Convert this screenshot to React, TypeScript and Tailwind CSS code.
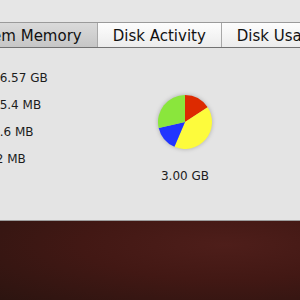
const FONT = { fontFamily: '"DejaVu Sans", "Liberation Sans", sans-serif' };

const TABS = [
  { label: "System Memory", active: true },
  { label: "Disk Activity", active: false },
  { label: "Disk Usage", active: false },
];

// values are clipped on the left edge of the window
const ROWS = ["16.57 GB", "45.4 MB", "8.6 MB", "\u00a02 MB"];

function Pie() {
  return (
    <svg width="54" height="54" viewBox="0 0 54 54" className="drop-shadow-[0_0_2px_rgba(0,0,0,0.25)]">
      <path d="M27 27 L27 0 A27 27 0 0 1 49.64 12.3 Z" fill="#dd2a00" />
      <path d="M27 27 L49.64 12.3 A27 27 0 0 1 16.45 51.85 Z" fill="#fdfb3c" />
      <path d="M27 27 L16.45 51.85 A27 27 0 0 1 0.69 33.07 Z" fill="#2135ff" />
      <path d="M27 27 L0.69 33.07 A27 27 0 0 1 27 0 Z" fill="#8ae63c" />
    </svg>
  );
}

export default function App() {
  return (
    <div className="w-[300px] h-[300px] overflow-hidden flex flex-col" style={FONT}>
      <div className="bg-[#e6e6e6] pt-[22px] border-b border-[#9c9c9c]">
        {/* Tab strip */}
        <div className="flex ml-[-55px] border-t border-b border-t-[#9a9a9a] border-b-[#727272] shadow-[0_1px_1px_rgba(0,0,0,0.12)]">
          {TABS.map((t) => (
            <div
              key={t.label}
              className={`shrink-0 h-[24px] px-[15px] pt-[3px] leading-[21px] text-[15px] text-[#111] whitespace-nowrap border-r border-[#a8a8a8] ${
                t.active
                  ? "bg-gradient-to-b from-[#dadada] to-[#c6c6c6]"
                  : "bg-gradient-to-b from-[#fdfdfd] to-[#ececec]"
              }`}
            >
              {t.label}
            </div>
          ))}
        </div>

        {/* Panel */}
        <div className="h-[172px] flex pt-[17px] bg-[#e4e4e4]">
          <div className="w-[163px] shrink-0 ml-[-8px] flex flex-col">
            {ROWS.map((r) => (
              <div key={r} className="text-[12px] leading-[27px] text-[#1c1c1c] whitespace-nowrap">
                {r}
              </div>
            ))}
          </div>
          <div className="w-[60px] shrink-0 flex flex-col items-center mt-[30px]">
            <Pie />
            <div className="mt-[19px] text-[12px] leading-[16px] text-[#1c1c1c] whitespace-nowrap">3.00 GB</div>
          </div>
        </div>
      </div>

      {/* Desktop behind the window */}
      <div className="flex-1 bg-[#451a16] bg-[radial-gradient(ellipse_at_75%_30%,#4e1e1a_0%,#421814_45%,#2c1410_100%)]" />
    </div>
  );
}
